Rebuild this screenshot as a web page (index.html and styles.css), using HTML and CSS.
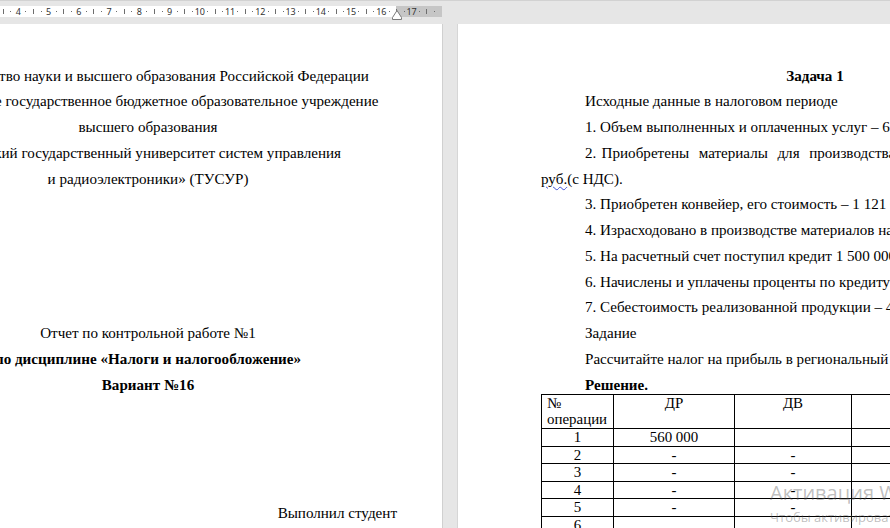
FILE: index.html
```html
<!DOCTYPE html>
<html lang="ru">
<head>
  <meta charset="UTF-8" />
  <title>Отчет по контрольной работе №1</title>
  <meta name="viewport" content="width=device-width, initial-scale=1.0" />
  <link rel="stylesheet" href="styles.css">
</head>
<body>
  <div class="ruler-bar">
    <div class="ruler">
      <div class="ruler-nums">
        <span>4</span><span>5</span><span>6</span><span>7</span><span>8</span><span>9</span><span>10</span>
        <span>11</span><span>12</span><span>13</span><span>14</span><span>15</span><span>16</span><span>17</span>
      </div>
      <svg class="indent-mark" width="10" height="10" viewBox="0 0 10 10">
        <polygon points="5,0.5 9.5,7.5 9.5,9.5 0.5,9.5 0.5,7.5" fill="#fff" stroke="#7a7a7a" stroke-width="1" />
      </svg>
    </div>
  </div>

  <div class="desk">
    <section class="page page-left">
      <p class="c">Министерство науки и высшего образования Российской Федерации</p>
      <p class="c">Федеральное государственное бюджетное образовательное учреждение</p>
      <p class="c">высшего образования</p>
      <p class="c">«Томский государственный университет систем управления</p>
      <p class="c">и радиоэлектроники» (ТУСУР)</p>
      <p class="blank"></p>
      <p class="blank"></p>
      <p class="blank"></p>
      <p class="blank"></p>
      <p class="blank"></p>
      <p class="c">Отчет по контрольной работе №1</p>
      <p class="c b">по дисциплине «Налоги и налогообложение»</p>
      <p class="c b">Вариант №16</p>
      <p class="blank"></p>
      <p class="blank"></p>
      <p class="blank"></p>
      <p class="blank"></p>
      <p class="r">Выполнил студент</p>
    </section>

    <section class="page page-right">
      <p class="ind c b">Задача 1</p>
      <p class="ind">Исходные данные в налоговом периоде</p>
      <p class="ind">1. Объем выполненных и оплаченных услуг – 672 000 руб. (с НДС).</p>
      <p class="ind spread"><span class="num">2. </span>Приобретены материалы для производства продукции на сумму 354 000</p>
      <p><span class="typo">руб.</span>(с НДС).</p>
      <p class="ind">3. Приобретен конвейер, его стоимость – 1 121 000 руб. (с НДС).</p>
      <p class="ind">4. Израсходовано в производстве материалов на сумму 180 000 руб.</p>
      <p class="ind">5. На расчетный счет поступил кредит 1 500 000 руб.</p>
      <p class="ind">6. Начислены и уплачены проценты по кредиту – 45 000 руб.</p>
      <p class="ind">7. Себестоимость реализованной продукции – 410 000 руб.</p>
      <p class="ind">Задание</p>
      <p class="ind">Рассчитайте налог на прибыль в региональный и федеральный бюджеты.</p>
      <p class="ind b">Решение.</p>

      <table class="calc">
        <colgroup>
          <col style="width:72px"><col style="width:121px"><col style="width:117px"><col style="width:96px"><col style="width:110px">
        </colgroup>
        <tr>
          <td class="l">№<br>операции</td><td>ДР</td><td>ДВ</td><td>РР</td><td>РВ</td>
        </tr>
        <tr><td>1</td><td>560 000</td><td></td><td></td><td></td></tr>
        <tr><td>2</td><td>-</td><td>-</td><td></td><td></td></tr>
        <tr><td>3</td><td>-</td><td>-</td><td></td><td></td></tr>
        <tr><td>4</td><td>-</td><td>-</td><td></td><td></td></tr>
        <tr><td>5</td><td>-</td><td>-</td><td></td><td></td></tr>
        <tr><td>6</td><td></td><td></td><td></td><td></td></tr>
      </table>
    </section>

    <div class="activation">
      <div class="act-title">Активация Windows</div>
      <div class="act-sub">Чтобы активировать Windows, перейдите в раздел "Параметры".</div>
    </div>
  </div>
</body>
</html>
```

FILE: styles.css
```css
html, body {
  margin: 0;
  height: 100%;
  overflow: hidden;
}
body {
  background: #e6e6e6;
  font-family: 'Liberation Serif', 'Times New Roman', serif;
  color: #000;
}

/* ruler */
.ruler-bar {
  height: 24px;
  box-sizing: border-box;
  border-top: 1px solid #d2d2d2;
  background: #e6e6e6;
  position: relative;
}
.ruler {
  margin-top: 5px;
  width: 442px;
  height: 11px;
  background:
    repeating-linear-gradient(to right, transparent 0 10.3px, #6e6e6e 10.3px 11.3px, transparent 11.3px 15.13px) 0 5px / 100% 1px no-repeat,
    repeating-linear-gradient(to right, transparent 0 2.7px, #6e6e6e 2.7px 3.7px, transparent 3.7px 30.26px) 0 3px / 100% 5px no-repeat,
    linear-gradient(to right, #fff 0 396px, #c6c6c6 396px 442px);
}
.ruler-nums {
  display: flex;
  padding-left: 3.17px;
  font-family: 'Noto Sans', sans-serif;
  font-size: 9px;
  line-height: 11px;
  color: #333;
}
.ruler-nums span {
  flex: 0 0 30.26px;
  text-align: center;
}
.indent-mark {
  position: absolute;
  left: 392px;
  top: 9px;
}

/* pages */
.desk {
  display: flex;
  align-items: flex-start;
  position: relative;
}
.page {
  flex: 0 0 636px;
  min-width: 0;
  box-sizing: border-box;
  background: #fff;
  height: 600px;
  padding-top: 35px;
  font-size: 15.1px;
}
.page-left {
  margin-left: -193px;
  padding-left: 92px;
  padding-right: 45px;
  border-right: 1px solid #d0d0d0;
}
.page-right {
  margin-left: 14px;
  padding-left: 83px;
  padding-right: 48px;
  border-left: 1px solid #d6d6d6;
}
.page p {
  margin: 0;
  padding-top: 8.6px;
  line-height: 17.16px;
  height: 17.16px;
  white-space: nowrap;
}
.page .c { text-align: center; }
.page .r { text-align: right; }
.page .b { font-weight: bold; }
.page .ind { text-indent: 44px; }
.page .spread { word-spacing: 5.8px; }
.page .spread .num { word-spacing: 1.5px; }
.typo {
  text-decoration: underline wavy #3d4fd6;
  text-decoration-thickness: 1px;
  text-underline-offset: 2px;
}

/* table */
.calc {
  width: 517px;
  border-collapse: collapse;
  table-layout: fixed;
  font-size: 14.93px;
  line-height: 16.6px;
}
.calc td {
  border: 1px solid #000;
  padding: 0 5px;
  text-align: center;
  vertical-align: top;
  white-space: nowrap;
}
.calc td.l { text-align: left; }

/* windows watermark */
.activation {
  position: absolute;
  left: 770px;
  top: 456px;
  font-family: 'Open Sans', 'Noto Sans', sans-serif;
  color: rgba(90, 90, 90, 0.4);
  white-space: nowrap;
}
.act-title {
  font-size: 20px;
  line-height: 26px;
}
.act-sub {
  font-size: 13px;
  line-height: 18px;
  margin-top: 2px;
}
```
